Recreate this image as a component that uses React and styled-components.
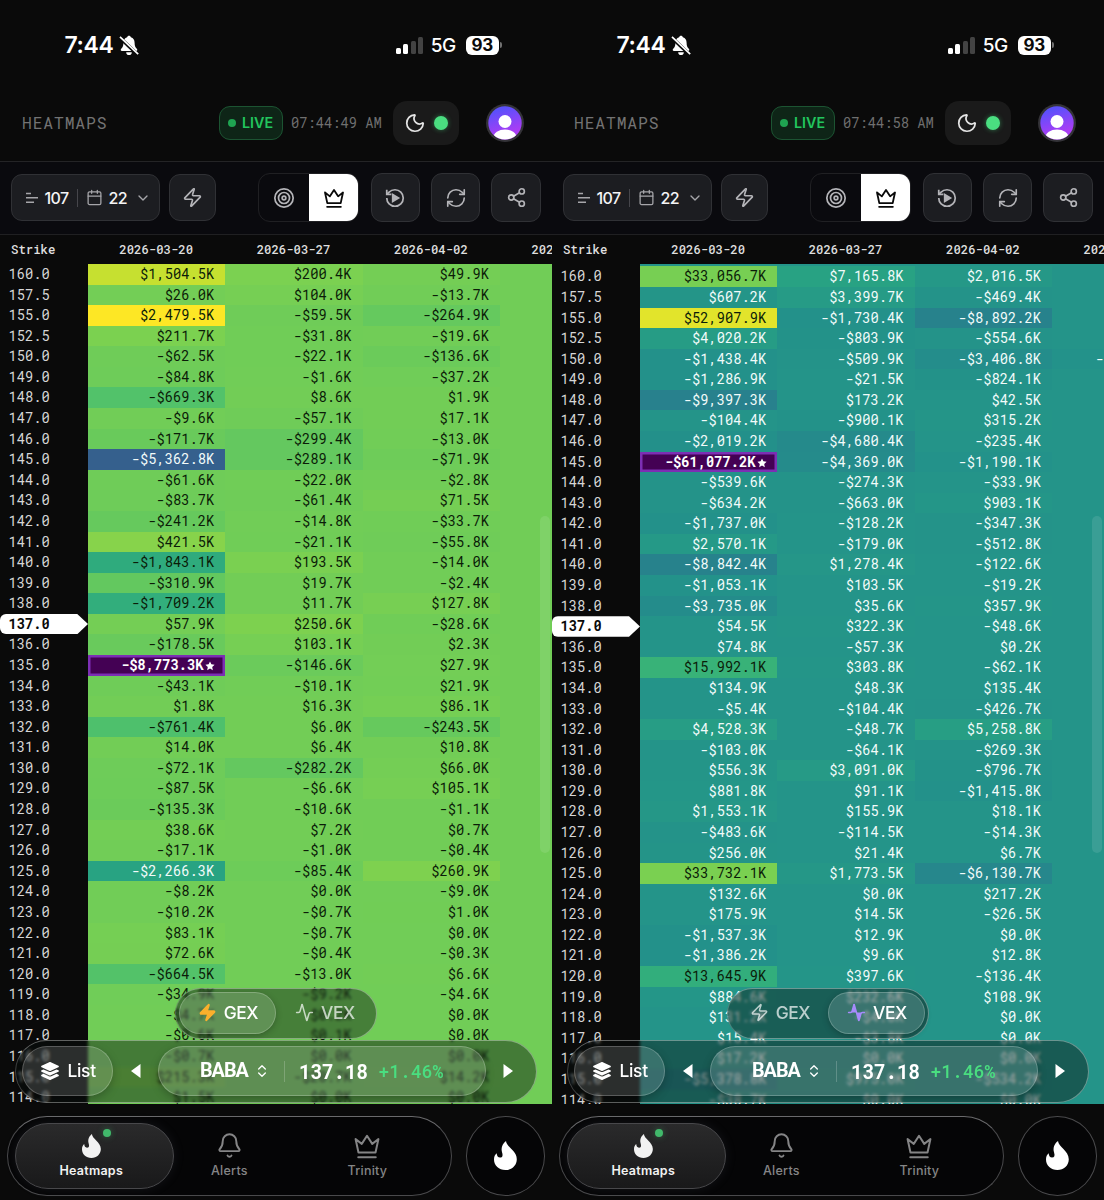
import React from "react";
import styled, { createGlobalStyle, css } from "styled-components";
import {
  Bell,
  Calendar,
  ChevronDown,
  ChevronsUpDown,
  Moon,
  RefreshCw,
  Share2,
  Target,
  Zap,
} from "lucide-react";
import { FaLayerGroup } from "react-icons/fa6";

const STRIKES = [160, 157.5, 155, 152.5, 150];
for (let s = 149; s >= 114; s--) STRIKES.push(s);

const DATES = ["2026-03-20", "2026-03-27", "2026-04-02", "2026-04-17"];

// one list per expiry, values in thousands
const GEX = [
  [
    1504.5, 26, 2479.5, 211.7, -62.5, -84.8, -669.3, -9.6, -171.7, -5362.8,
    -61.6, -83.7, -241.2, 421.5, -1843.1, -310.9, -1709.2, 57.9, -178.5,
    -8773.3, -43.1, 1.8, -761.4, 14, -72.1, -87.5, -135.3, 38.6, -17.1,
    -2266.3, -8.2, -10.2, 83.1, 72.6, -664.5, -34.9, -4.7, -0.6, -0.7, 215.3,
    1.5,
  ],
  [
    200.4, 104, -59.5, -31.8, -22.1, -1.6, 8.6, -57.1, -299.4, -289.1, -22,
    -61.4, -14.8, -21.1, 193.5, 19.7, 11.7, 250.6, 103.1, -146.6, -10.1, 16.3,
    6, 6.4, -282.2, -6.6, -10.6, 7.2, -1, -85.4, 0, -0.7, -0.7, -0.4, -13,
    -9.2, 0.2, 0.1, 0, -20.7, 0,
  ],
  [
    49.9, -13.7, -264.9, -19.6, -136.6, -37.2, 1.9, 17.1, -13, -71.9, -2.8,
    71.5, -33.7, -55.8, -14, -2.4, 127.8, -28.6, 2.3, 27.9, 21.9, 86.1, -243.5,
    10.8, 66, 105.1, -1.1, 0.7, -0.4, 260.9, -9, 1, 0, -0.3, 6.6, -4.6, 0, 0,
    0, 14.2, 0,
  ],
  [],
];

const VEX = [
  [
    33056.7, 607.2, 52907.9, 4020.2, -1438.4, -1286.9, -9397.3, -104.4,
    -2019.2, -61077.2, -539.6, -634.2, -1737, 2570.1, -8842.4, -1053.1, -3735,
    54.5, 74.8, 15992.1, 134.9, -5.4, 4528.3, -103, 556.3, 881.8, 1553.1,
    -483.6, 256, 33732.1, 132.6, 175.9, -1537.3, -1386.2, 13645.9, 884.6,
    131.2, 15.4, 17.2, -5378.8, -38.7,
  ],
  [
    7165.8, 3399.7, -1730.4, -803.9, -509.9, -21.5, 173.2, -900.1, -4680.4,
    -4369, -274.3, -663, -128.2, -179, 1278.4, 103.5, 35.6, 322.3, -57.3,
    303.8, 48.3, -104.4, -48.7, -64.1, 3091, 91.1, 155.9, -114.5, 21.4, 1773.5,
    0, 14.5, 12.9, 9.6, 397.6, 232.6, -4, -3.8, 0, 975, 0,
  ],
  [
    2016.5, -469.4, -8892.2, -554.6, -3406.8, -824.1, 42.5, 315.2, -235.4,
    -1190.1, -33.9, 903.1, -347.3, -512.8, -122.6, -19.2, 357.9, -48.6, 0.2,
    -62.1, 135.4, -426.7, 5258.8, -269.3, -796.7, -1415.8, 18.1, -14.3, 6.7,
    -6130.7, 217.2, -26.5, 0, 12.8, -136.4, 108.9, 0, 0, 0, -534.2, 0,
  ],
  [undefined, undefined, undefined, undefined, -1204.6],
];

const SCREENS = [
  { mode: "GEX", time: "07:44:49 AM", data: GEX, min: -8773.3, max: 2479.5, offset: 0 },
  { mode: "VEX", time: "07:44:58 AM", data: VEX, min: -61077.2, max: 58000, offset: 2.4 },
];

const VIRIDIS = [
  [68, 1, 84],
  [72, 36, 117],
  [65, 68, 135],
  [53, 95, 141],
  [42, 120, 142],
  [35, 145, 138],
  [42, 168, 128],
  [72, 190, 112],
  [124, 209, 80],
  [189, 223, 50],
  [253, 231, 37],
];

const viridis = (t) => {
  const p = Math.min(Math.max(t, 0), 1) * 10;
  const i = Math.min(Math.floor(p), 9);
  const c = VIRIDIS[i].map((a, k) =>
    Math.round(a + (VIRIDIS[i + 1][k] - a) * (p - i))
  );
  return `rgb(${c.join(",")})`;
};

const money = (v) =>
  (v < 0 ? "-$" : "$") +
  Math.abs(v).toLocaleString("en-US", {
    minimumFractionDigits: 1,
    maximumFractionDigits: 1,
  }) +
  "K";

const Flame = ({ size }) => (
  <svg width={(size * 22) / 28} height={size} viewBox="0 0 22 28" fill="currentColor">
    <path d="M11.6 0C11.8 5.6 22 9.3 22 17.6 22 23.6 17.2 28 11 28S0 23.8 0 17.8c0-2.7.9-4.6 2.6-6 .1 2.6 1.3 4.2 3.2 4.2 2.3 0 3-1.9 2-5C6.5 6.8 8 2.6 11.6 0Z" />
  </svg>
);

const Crown = ({ size, strokeWidth = 2 }) => (
  <svg
    width={size}
    height={size}
    viewBox="0 0 24 24"
    fill="none"
    stroke="currentColor"
    strokeWidth={strokeWidth}
    strokeLinejoin="round"
    strokeLinecap="round"
  >
    <path d="M4.7 17.6 2.2 6l5.3 4.2L12 3.2l4.500 7L21.800 6l-2.500 11.600Z" />
    <path d="M4.500 21.600h15" />
  </svg>
);

const BellOff = () => (
  <svg width="20" height="21" viewBox="0 0 20 21">
    <path
      fill="#fff"
      d="M10 .8c1 0 1.700.6 1.900 1.500 2.400.8 3.700 2.800 3.700 5.500 0 3.600.8 4.700 2.200 6 .9.9.5 2.200-.8 2.200H3c-1.300 0-1.700-1.300-.8-2.200 1.400-1.300 2.200-2.400 2.200-6 0-2.700 1.300-4.700 3.700-5.500C8.300 1.400 9 .8 10 .8ZM7.200 17.300h5.600a2.800 2.800 0 0 1-5.600 0Z"
    />
    <path d="M.5 2.300 18.800 19.800" stroke="#0a0a0a" strokeWidth="3.400" />
    <path d="M1 1.800 19.200 19.200" stroke="#fff" strokeWidth="1.700" />
  </svg>
);

const Pulse = ({ filled }) => (
  <svg
    width="19"
    height="19"
    viewBox="0 0 24 24"
    fill={filled ? "#a78bfa" : "none"}
    stroke={filled ? "#a78bfa" : "currentColor"}
    strokeWidth="1.900"
    strokeLinejoin="round"
    strokeLinecap="round"
  >
    <path d="M22 12h-2.500a2 2 0 0 0-1.900 1.500l-2.400 8.300a.25.25 0 0 1-.5 0L9.200 2.200a.25.25 0 0 0-.5 0l-2.300 8.300A2 2 0 0 1 4.500 12H2" />
  </svg>
);

const Replay = () => (
  <svg width="22" height="22" viewBox="0 0 24 24" fill="none" stroke="currentColor" strokeWidth="1.900">
    <path d="M3 12a9 9 0 1 0 9-9 9.750 9.750 0 0 0-6.740 2.740L3 8" />
    <path d="M3 3v5h5" />
    <path d="M9.500 8.200v7.600l6.300-3.800Z" fill="currentColor" />
  </svg>
);

const Phone = ({ mode, time, data, min, max, offset }) => {
  const shade = (v) => viridis((v - min) / (max - min));

  return (
    <Screen>
      <StatusBar>
        <Clock>7:44</Clock>
        <BellOff />
        <Signal>
          <Bar $h={6} />
          <Bar $h={10} />
          <Bar $h={13} $dim />
          <Bar $h={17} $dim />
        </Signal>
        <Network>5G</Network>
        <Battery>93</Battery>
        <Nub />
      </StatusBar>

      <Header>
        <Title>HEATMAPS</Title>
        <Live>
          <LiveDot />
          <span>LIVE</span>
        </Live>
        <Time>{time}</Time>
        <ThemePill>
          <Moon size={22} strokeWidth={1.9} />
          <OnlineDot />
        </ThemePill>
        <Avatar viewBox="0 0 38 38">
          <defs>
            <linearGradient id={`av${mode}`} x1="0.3" y1="0" x2="0.6" y2="1">
              <stop offset="0.1" stopColor="#5b50fb" />
              <stop offset="0.8" stopColor="#a93df5" />
            </linearGradient>
            <clipPath id={`clip${mode}`}>
              <circle cx="19" cy="19" r="16.5" />
            </clipPath>
          </defs>
          <circle cx="19" cy="19" r="19" fill="#343338" />
          <circle cx="19" cy="19" r="16.7" fill={`url(#av${mode})`} />
          <g clipPath={`url(#clip${mode})`} fill="#fff">
            <circle cx="19" cy="17.5" r="6.5" />
            <ellipse cx="19" cy="33.5" rx="11.5" ry="8" />
          </g>
        </Avatar>
      </Header>

      <Toolbar>
        <Filters>
          <svg width="14" height="14" viewBox="0 0 14 14" stroke="#a6a6aa" strokeWidth="1.5">
            <path d="M1 2.500h5M1 6.800h12M1 11.200h8" />
          </svg>
          <Count>107</Count>
          <Divider />
          <Calendar size={17} strokeWidth={1.8} />
          <Count>22</Count>
          <ChevronDown size={16} strokeWidth={2} />
        </Filters>
        <ToolButton $small>
          <Zap size={21} strokeWidth={1.9} />
        </ToolButton>
        <Segment>
          <SegmentItem>
            <Target size={22} strokeWidth={1.9} />
          </SegmentItem>
          <SegmentItem $active>
            <Crown size={22} />
          </SegmentItem>
        </Segment>
        <ToolButton>
          <Replay />
        </ToolButton>
        <ToolButton>
          <RefreshCw size={22} strokeWidth={1.8} />
        </ToolButton>
        <ToolButton>
          <Share2 size={21} strokeWidth={1.9} />
        </ToolButton>
      </Toolbar>

      <TableHead>
        <StrikeHead>Strike</StrikeHead>
        {DATES.map((d) => (
          <DateHead key={d}>{d}</DateHead>
        ))}
      </TableHead>

      <Heatmap $zero={shade(0)} $offset={offset}>
        {STRIKES.map((strike, r) => (
          <Row key={strike}>
            <Strike $spot={strike === 137}>{strike.toFixed(1)}</Strike>
            {data.map((col, c) => {
              const v = col[r];
              if (v === undefined) return <Cell key={c} />;
              const t = (v - min) / (max - min);
              return (
                <Cell
                  key={c}
                  $light={t < 0.6}
                  $peak={v === min}
                  style={{ background: viridis(t) }}
                >
                  {money(v)}
                  {v === min && (
                    <svg width="10" height="10" viewBox="0 0 24 24" fill="#fff">
                      <path d="m12 1 3.300 7 7.700 1-5.700 5.300L18.800 22 12 18.200 5.200 22l1.500-7.700L1 9l7.700-1Z" />
                    </svg>
                  )}
                </Cell>
              );
            })}
          </Row>
        ))}

        <Thumb />

        <Toggle>
          <ToggleItem $active={mode === "GEX"}>
            <Zap
              size={19}
              strokeWidth={1.9}
              color={mode === "GEX" ? "#fbb02d" : "currentColor"}
              fill={mode === "GEX" ? "#fbb02d" : "none"}
            />
            GEX
          </ToggleItem>
          <ToggleItem $active={mode === "VEX"}>
            <Pulse filled={mode === "VEX"} />
            VEX
          </ToggleItem>
        </Toggle>

        <Dock>
          <ListButton>
            <FaLayerGroup size={20} />
            <span>List</span>
          </ListButton>
          <Arrow viewBox="0 0 10 14">
            <path d="M9.500 0v14L0 7Z" />
          </Arrow>
          <Ticker>
            <Symbol>BABA</Symbol>
            <ChevronsUpDown size={16} strokeWidth={2} />
            <TickerLine />
            <Price>137.18</Price>
            <Change>+1.46%</Change>
          </Ticker>
          <Arrow viewBox="0 0 10 14">
            <path d="M.5 0v14L10 7Z" />
          </Arrow>
        </Dock>
      </Heatmap>

      <BottomBar>
        <Nav>
          <NavItem $active>
            <IconSlot>
              <Flame size={24} />
              <NavDot />
            </IconSlot>
            Heatmaps
          </NavItem>
          <NavItem>
            <IconSlot>
              <Bell size={27} strokeWidth={1.7} />
            </IconSlot>
            Alerts
          </NavItem>
          <NavItem>
            <IconSlot>
              <Crown size={28} strokeWidth={1.7} />
            </IconSlot>
            Trinity
          </NavItem>
        </Nav>
        <RoundButton>
          <Flame size={29} />
        </RoundButton>
      </BottomBar>
    </Screen>
  );
};

const App = () => (
  <>
    <GlobalStyle />
    <Page>
      {SCREENS.map((s) => (
        <Phone key={s.mode} {...s} />
      ))}
    </Page>
  </>
);

const mono = css`
  font-family: "Roboto Mono", "DejaVu Sans Mono", "Liberation Mono", monospace;
`;

const GlobalStyle = createGlobalStyle`
  * {
    box-sizing: border-box;
  }
  body {
    margin: 0;
    background: #0a0a0a;
    font-family: Inter, "Liberation Sans", sans-serif;
  }
  svg {
    flex-shrink: 0;
    display: block;
  }
`;

const Page = styled.div`
  display: flex;
  width: 1104px;
  height: 1200px;
  overflow: hidden;
`;

const Screen = styled.div`
  display: flex;
  flex-direction: column;
  width: 552px;
  height: 1200px;
  overflow: hidden;
  background: #0a0a0a;
`;

const StatusBar = styled.div`
  display: flex;
  align-items: center;
  height: 90px;
  padding-left: 64.5px;
  color: #fff;
`;
const Clock = styled.div`
  width: 54px;
  font-size: 23px;
  font-weight: 600;
  letter-spacing: -0.4px;
`;
const Signal = styled.div`
  display: flex;
  align-items: flex-end;
  gap: 2.4px;
  height: 17px;
  margin-left: 257.5px;
`;
const Bar = styled.div`
  width: 5px;
  height: ${({ $h }) => $h}px;
  border-radius: 1.5px;
  background: ${({ $dim }) => ($dim ? "#434343" : "#fff")};
`;
const Network = styled.div`
  width: 35px;
  margin-left: 7.5px;
  font-size: 19px;
  font-weight: 500;
  letter-spacing: -0.3px;
`;
const Battery = styled.div`
  width: 33px;
  height: 19px;
  border-radius: 6px;
  background: #fff;
  color: #0a0a0a;
  font-size: 17px;
  font-weight: 700;
  line-height: 19px;
  text-align: center;
  letter-spacing: -0.3px;
`;
const Nub = styled.div`
  width: 2px;
  height: 6px;
  margin-left: 1.5px;
  border-radius: 0 2px 2px 0;
  background: #707070;
`;

const Header = styled.div`
  display: flex;
  align-items: center;
  height: 71px;
  padding: 0 0 5px 22px;
`;
const Title = styled.div`
  ${mono}
  width: 196.5px;
  padding-bottom: 1px;
  color: #737373;
  font-size: 16.3px;
  letter-spacing: 0.9px;
`;
const Live = styled.div`
  display: flex;
  align-items: center;
  gap: 6px;
  width: 64.5px;
  height: 34px;
  padding-left: 8.5px;
  border: 1px solid #1c5432;
  border-radius: 11px;
  background: #0e2517;
  color: #22c55e;
  font-size: 14.3px;
  font-weight: 600;

  span {
    padding-bottom: 1px;
  }
`;
const LiveDot = styled.div`
  width: 8px;
  height: 8px;
  border-radius: 50%;
  background: #1fa451;
`;
const Time = styled.div`
  ${mono}
  width: 102px;
  margin-left: 8px;
  color: #6f6f6f;
  font-size: 13.75px;
  white-space: nowrap;
`;
const ThemePill = styled.div`
  display: flex;
  align-items: center;
  gap: 8px;
  width: 65.5px;
  height: 44px;
  padding-left: 11px;
  border-radius: 14px;
  background: #1a1a1a;
  color: #e4e4e4;
`;
const OnlineDot = styled.div`
  width: 14px;
  height: 14px;
  border-radius: 50%;
  background: #4ade80;
  box-shadow: 0 0 5px rgba(74, 222, 128, 0.45);
`;
const Avatar = styled.svg`
  width: 38px;
  height: 38px;
  margin-left: 27.8px;
`;

const Toolbar = styled.div`
  display: flex;
  align-items: center;
  height: 74px;
  padding: 0 11px 1px;
  border-top: 1px solid #242426;
  border-bottom: 1px solid #202022;
  background: #0a0a0e;
`;
const Filters = styled.div`
  display: flex;
  align-items: center;
  width: 149.4px;
  height: 47px;
  padding-left: 12.5px;
  border: 1px solid #303135;
  border-radius: 11px;
  background: #1c1d21;
  color: #a6a6aa;
`;
const Count = styled.span`
  margin: 0 8px 0 6px;
  color: #f4f4f5;
  font-size: 16px;
  font-weight: 500;
  letter-spacing: -0.6px;
`;
const Divider = styled.div`
  width: 1px;
  height: 18px;
  margin-right: 8px;
  background: #46464b;
`;
const ToolButton = styled.div`
  display: flex;
  align-items: center;
  justify-content: center;
  width: ${({ $small }) => ($small ? 47 : 49.4)}px;
  height: ${({ $small }) => ($small ? 47 : 49)}px;
  margin-left: ${({ $small }) => ($small ? 8.5 : 11)}px;
  border: 1px solid #303135;
  border-radius: 11px;
  background: #1c1d21;
  color: #b4b4b8;
`;
const Segment = styled.div`
  display: flex;
  width: 101px;
  height: 49px;
  margin-left: 42.3px;
  margin-right: 0.5px;
  border: 1px solid #202023;
  border-radius: 12px;
  overflow: hidden;
`;
const SegmentItem = styled.div`
  display: flex;
  flex: ${({ $active }) => ($active ? "0 0 49px" : 1)};
  align-items: center;
  justify-content: center;
  background: ${({ $active }) => ($active ? "#fff" : "transparent")};
  color: ${({ $active }) => ($active ? "#0a0a0a" : "#b4b4b8")};
`;

const TableHead = styled.div`
  ${mono}
  display: grid;
  grid-template-columns: 88px repeat(4, 137.4px);
  align-items: center;
  height: 29px;
  padding-bottom: 2px;
  color: #dedede;
  font-size: 12.3px;
  font-weight: 500;
`;
const StrikeHead = styled.div`
  padding-left: 11px;
`;
const DateHead = styled.div`
  padding-right: 1px;
  text-align: center;
`;

const Heatmap = styled.div`
  position: relative;
  height: 840px;
  padding-top: ${({ $offset }) => $offset}px;
  overflow: hidden;
  background: linear-gradient(
    to right,
    #0a0a0a 88px,
    ${({ $zero }) => $zero} 88px
  );
`;
const Row = styled.div`
  ${mono}
  display: grid;
  grid-template-columns: 88px repeat(4, 137.4px);
  height: 20.59px;
  font-size: 13.75px;
  line-height: 20.4px;
`;
const Strike = styled.div`
  padding-left: 8.5px;
  color: #d6d6d6;
  ${({ $spot }) =>
    $spot &&
    css`
      border-radius: 6px 0 0 6px;
      background: #fff;
      color: #0a0a0a;
      font-weight: 700;
      clip-path: polygon(0 0, 77px 0, 100% 50%, 77px 100%, 0 100%);
    `}
`;
const Cell = styled.div`
  display: flex;
  justify-content: flex-end;
  padding-right: 11.2px;
  color: ${({ $light }) => ($light ? "#f2fbfa" : "#0b1c08")};
  white-space: nowrap;
  ${({ $peak }) =>
    $peak &&
    css`
      gap: 2px;
      padding-right: 10px;
      box-shadow: inset 0 0 0 2.5px #7c2fb4;
      color: #fff;
      font-weight: 700;

      svg {
        margin-top: 6px;
      }
    `}
`;
const Thumb = styled.div`
  position: absolute;
  top: 252px;
  right: 2px;
  width: 10px;
  height: 337px;
  border-radius: 5px;
  background: rgba(255, 255, 255, 0.1);
`;

const glassEdge = css`
  border: 1px solid rgba(255, 255, 255, 0.36);
  border-left-color: rgba(255, 255, 255, 0.22);
`;

const Toggle = styled.div`
  ${glassEdge}
  position: absolute;
  top: 723.5px;
  left: 175.4px;
  display: flex;
  align-items: center;
  justify-content: space-between;
  width: 202px;
  height: 51px;
  padding: 0 3px 1px;
  border-radius: 26px;
  background: rgba(12, 20, 16, 0.42);
  backdrop-filter: blur(1.5px);
`;
const ToggleItem = styled.div`
  display: flex;
  align-items: center;
  justify-content: center;
  gap: 7px;
  width: 97px;
  height: 42px;
  border: 1px solid transparent;
  border-radius: 21px;
  color: rgba(255, 255, 255, 0.7);
  font-size: 17.4px;
  font-weight: 500;
  letter-spacing: -0.4px;
  ${({ $active }) =>
    $active &&
    css`
      border-color: rgba(255, 255, 255, 0.22);
      background: rgba(255, 255, 255, 0.14);
      box-shadow: 0 2px 6px rgba(0, 0, 0, 0.25);
      color: #fff;
    `}
`;

const Dock = styled.div`
  ${glassEdge}
  position: absolute;
  left: 15px;
  bottom: 1px;
  display: flex;
  align-items: center;
  width: 521.5px;
  height: 63px;
  padding: 0 0 1px 6px;
  border-radius: 32px;
  background: rgba(10, 16, 14, 0.43);
  backdrop-filter: blur(1.5px);
  color: #fff;
`;
const ListButton = styled.div`
  display: flex;
  align-items: center;
  gap: 8px;
  width: 91.4px;
  height: 50px;
  padding-left: 16.5px;
  border: 1px solid rgba(255, 255, 255, 0.22);
  border-radius: 25px;
  background: rgba(255, 255, 255, 0.14);
  box-shadow: 0 3px 8px rgba(0, 0, 0, 0.25);
  font-size: 17.4px;
  font-weight: 500;
  letter-spacing: -0.3px;

  span {
    padding-bottom: 2px;
  }
`;
const Arrow = styled.svg`
  width: 10px;
  height: 14px;
  margin: 0 17.3px;
  fill: #fff;
`;
const Ticker = styled.div`
  display: flex;
  align-items: center;
  width: 328px;
  height: 50px;
  padding-left: 41px;
  border: 1px solid rgba(255, 255, 255, 0.22);
  border-radius: 25px;
  background: rgba(255, 255, 255, 0.14);
  box-shadow: 0 3px 8px rgba(0, 0, 0, 0.25);
`;
const Symbol = styled.div`
  width: 54.5px;
  padding-bottom: 1px;
  font-family: Roboto, Inter, sans-serif;
  font-size: 19.8px;
  font-weight: 700;
  letter-spacing: -1px;
`;
const TickerLine = styled.div`
  width: 1px;
  height: 21px;
  margin: 0 13.5px 0 14px;
  background: rgba(255, 255, 255, 0.2);
`;
const Price = styled.div`
  ${mono}
  width: 79.5px;
  font-size: 19.4px;
  font-weight: 700;
  letter-spacing: -0.15px;
`;
const Change = styled.div`
  ${mono}
  color: #4ade80;
  font-size: 18px;
  font-weight: 500;
`;

const BottomBar = styled.div`
  display: flex;
  flex: 1;
  padding: 12px 0 0 7.4px;
  gap: 14px;
`;
const Nav = styled.div`
  display: flex;
  align-items: center;
  width: 444.5px;
  height: 79.5px;
  padding-left: 6.4px;
  border: 1px solid #4a4a4c;
  border-top-color: #6a6a6c;
  border-radius: 40px;
  background: #050506;
`;
const NavItem = styled.div`
  display: flex;
  flex-direction: column;
  align-items: center;
  gap: 4.5px;
  width: ${({ $active }) => ($active ? 159 : 138)}px;
  margin-right: ${({ $active }) => ($active ? -13.4 : 0)}px;
  height: 66px;
  padding-top: 8px;
  border: 1px solid transparent;
  border-radius: 33px;
  color: #858586;
  font-size: 12.5px;
  font-weight: 500;
  letter-spacing: 0.25px;
  line-height: 14px;
  ${({ $active }) =>
    $active &&
    css`
      padding-right: 6px;
      border: 1.5px solid #48484b;
      background: linear-gradient(#2a2a2b, #19191a);
      box-shadow: 0 0 12px rgba(120, 130, 160, 0.12);
      color: #f2f2f2;
      font-weight: 600;
    `}
`;
const IconSlot = styled.div`
  position: relative;
  display: flex;
  align-items: center;
  justify-content: center;
  width: 30px;
  height: 28px;
`;
const NavDot = styled.div`
  position: absolute;
  top: -3px;
  right: -4.5px;
  width: 8px;
  height: 8px;
  border-radius: 50%;
  background: #41b96b;
  box-shadow: 0 0 6px rgba(65, 185, 107, 0.4);
`;
const RoundButton = styled.div`
  display: flex;
  align-items: center;
  justify-content: center;
  width: 79px;
  height: 79.5px;
  border: 1px solid #4a4a4c;
  border-radius: 50%;
  background: #050506;
  color: #fff;
`;

export default App;
